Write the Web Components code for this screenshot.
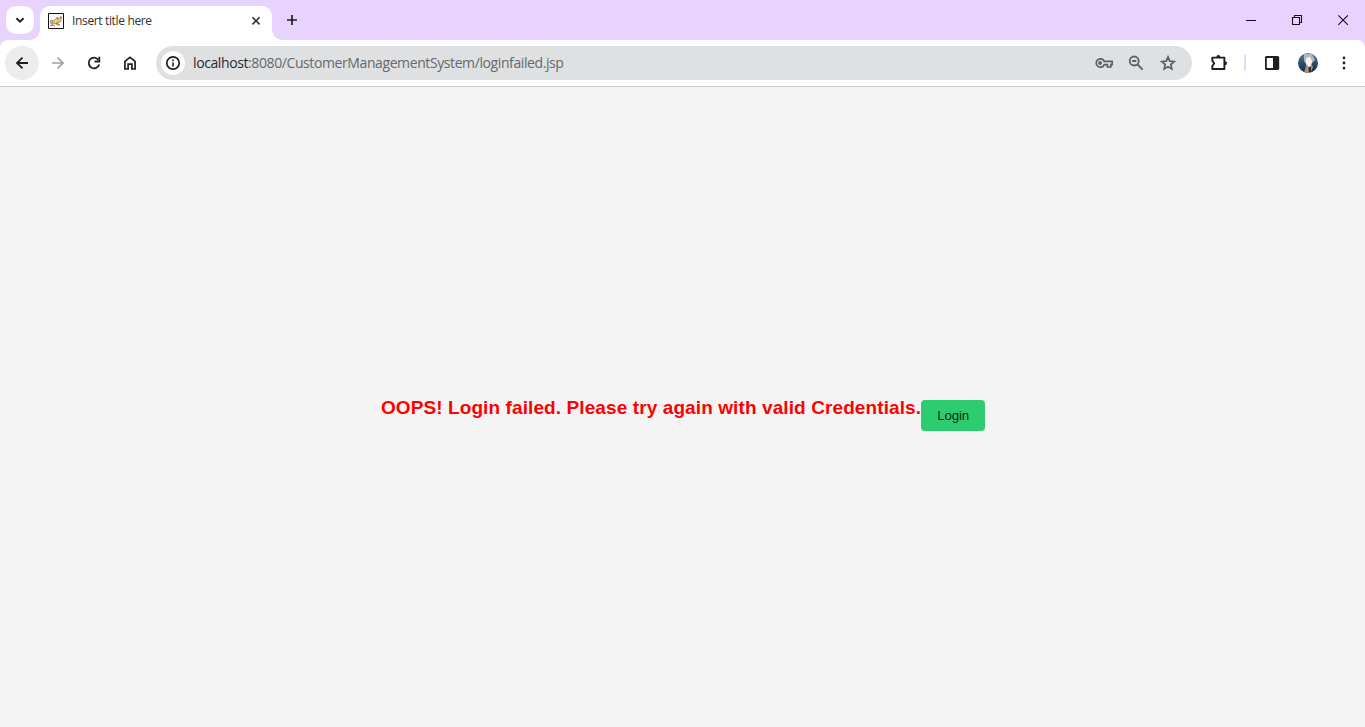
<!DOCTYPE html>
<html lang="en">
<head>
<meta charset="utf-8">
<title>Insert title here</title>
<style>
html,body{margin:0;height:100%;overflow:hidden}
body{font-family:"Open Sans","Noto Sans",sans-serif;background:#f4f4f4}
</style>
</head>
<body>
<browser-window>
  <tab-strip slot="tabs"><browser-tab>Insert title here</browser-tab></tab-strip>
  <tool-bar slot="toolbar"><address-bar><span slot="host">localhost</span><span slot="path">:8080/CustomerManagementSystem/loginfailed.jsp</span></address-bar></tool-bar>
  <login-failed><span>OOPS! Login failed. Please try again with valid Credentials.</span><login-button slot="action">Login</login-button></login-failed>
</browser-window>
<script>
const define = (name, html) => customElements.define(name, class extends HTMLElement {
  constructor() {
    super();
    const t = document.createElement('template');
    t.innerHTML = html;
    this.attachShadow({mode: 'open'}).append(t.content.cloneNode(true));
  }
});

const icons = {
  chevron: [16, '<path d="M4.4 6.2 8 9.7l3.600-3.500" stroke-width="1.9"/>'],
  close: [16, '<path d="m4.400 4.200 7.200 7.200m0-7.200-7.200 7.200" stroke-width="1.6"/>'],
  plus: [16, '<path d="M8 3v10M3 8h10" stroke-width="1.7"/>'],
  min: [16, '<path d="M3 8.500h10" stroke-width="1"/>'],
  restore: [16, '<path d="M3.500 5.500h7v7h-7zM5.500 5.500v-2h7v7h-2" stroke-width="1.1"/>'],
  x: [16, '<path d="m3.300 3.300 9.600 9.600m0-9.600-9.600 9.600" stroke-width="1.1"/>'],
  back: [16, '<path d="M14 8H3m5.500-5.300L3 8l5.500 5.300" stroke-width="1.8"/>'],
  forward: [16, '<path d="M2 8h11M7.500 2.700 13 8l-5.500 5.300" stroke-width="1.7"/>'],
  reload: [16, '<path d="M12.300 4.700A5.350 5.350 0 1 0 13.200 9.500" stroke-width="1.8"/><path d="M13.300 1.800v4.700H8.600" stroke-width="1.800"/>'],
  home: [16, '<path d="M2.900 14V6.300L8 2.400l5.100 3.900V14H9.900V9.200H6.100V14z" stroke-width="1.7"/>'],
  info: [16, '<circle cx="8" cy="8" r="6.200" stroke-width="1.700"/><path d="M8 7.400v4M8 4.600v1.600" stroke-width="1.600"/>'],
  key: [20, '<path d="M10.300 8.400A4.200 4.200 0 1 0 10.300 11.600H13.400V14H16.800V11.600H18.200V8.400z" stroke-width="1.700"/><circle cx="6.100" cy="10" r="1.900" fill="currentColor" stroke="none"/>'],
  zoom: [20, '<circle cx="8.200" cy="8" r="4.500" stroke-width="1.800"/><path d="m11.500 11.500 5.200 5.200M6.100 8h4.200" stroke-width="1.800"/>'],
  star: [20, '<path d="m10 3.900 1.750 4.250 4.450.4-3.400 3 1 4.500-3.800-2.400-3.800 2.400 1-4.500-3.400-3 4.450-.4z" stroke-width="1.700"/>'],
  puzzle: [20, '<path d="M3.300 4.600H15.400V16H3.300V13L5.200 10.400 3.300 7.700z" stroke-width="1.900" stroke-linejoin="round"/><path d="M7.400 4.100a2 2 0 0 1 4 0zM16 8.200a2 2 0 0 1 0 4z" fill="currentColor" stroke="none"/>'],
  panel: [20, '<rect x="3.900" y="4" width="12.400" height="12" rx=".6" stroke-width="1.800"/><path d="M11 4h5v12h-5z" fill="currentColor" stroke="none"/>'],
  dots: [20, '<g fill="currentColor" stroke="none"><circle cx="10" cy="4.900" r="1.400"/><circle cx="10" cy="10" r="1.400"/><circle cx="10" cy="15.100" r="1.400"/></g>']
};
customElements.define('ui-icon', class extends HTMLElement {
  constructor() { super(); this.attachShadow({mode: 'open'}); }
  connectedCallback() {
    const [s, d] = icons[this.getAttribute('name')];
    this.shadowRoot.innerHTML = `<style>:host{display:block;flex:none;width:${s}px;height:${s}px}svg{display:block}</style><svg width="${s}" height="${s}" viewBox="0 0 ${s} ${s}" fill="none" stroke="currentColor">${d}</svg>`;
  }
});

define('browser-window', `<style>
:host{display:flex;flex-direction:column;height:100vh;background:#e8d3fe}
</style><slot name="tabs"></slot><slot name="toolbar"></slot><slot></slot>`);

define('tab-strip', `<style>
:host{display:flex;height:40px;flex:none;background:#e8d3fe;color:#1f1f1f}
.search{width:28px;height:28px;border-radius:10px;background:#fff;display:grid;place-items:center;margin:6px 6px 0}
.new{margin:12px 0 0 12px}
.controls{display:flex;margin:0 -1px 0 auto;color:#160d20}
.controls div{width:46px;display:grid;justify-items:center;padding-top:12px}
</style>
<div class="search"><ui-icon name="chevron"></ui-icon></div>
<slot></slot>
<ui-icon class="new" name="plus"></ui-icon>
<div class="controls"><div><ui-icon name="min"></ui-icon></div><div><ui-icon name="restore"></ui-icon></div><div><ui-icon name="x"></ui-icon></div></div>`);

define('browser-tab', `<style>
:host{display:flex;align-items:center;position:relative;box-sizing:border-box;width:232px;height:34px;margin-top:6px;padding:0 8px 5px;border-radius:10px 10px 0 0;background:#fff;font-size:12px;color:#303030}
:host::before,:host::after{content:"";position:absolute;bottom:0;width:10px;height:10px}
:host::before{right:100%;background:radial-gradient(circle at 0 0,transparent 9.500px,#fff 10px)}
:host::after{left:100%;background:radial-gradient(circle at 100% 0,transparent 9.500px,#fff 10px)}
.fav{display:block;margin-right:8px;flex:none}
.label{white-space:nowrap;letter-spacing:-.35px;line-height:18px}
ui-icon{margin-left:auto}
</style>
<svg class="fav" width="16" height="16" viewBox="0 0 16 16"><path fill="#fff" stroke="#111" d="M.5.500h15v15H.5z"/><path fill="#c8a468" d="m7 6 2-2 1.500 1L13 3l1 1-1 5-2 1-1 1 2 1-2 1-3-2-3 1-2-1 2-3z"/><path fill="#ead08f" d="m6 8 3-2 1 3-3 1zM10.500 6l2-1-.5 3-2 0z"/><path fill="none" stroke="#706048" stroke-width=".7" d="m8 10 4 2M12.800 3.500v2M9 4l.8 2"/><path fill="none" stroke="#77787a" stroke-width=".9" d="m4 10-2-1 1-2 2 .5M2 13l3-1 2 1"/></svg>
<span class="label"><slot></slot></span><ui-icon name="close"></ui-icon>`);

define('tool-bar', `<style>
:host{display:flex;align-items:center;box-sizing:border-box;height:47px;flex:none;background:#fff;border-bottom:1px solid #cbcbcc;border-radius:8px 8px 0 0;padding:0 11px 0 5px;color:#1f1f1f}
.b{width:34px;height:34px;margin-right:2px;display:grid;place-items:center;border-radius:50%}
.on{background:#ececee}.off{color:#a0a0a0}
slot{display:block;flex:1;margin-left:7px}
.ext{margin-left:17px}
.sep{width:2px;height:16px;background:#e5d8f8;margin:0 16px 0 15px}
.avatar{margin:0 16px;display:block}
</style>
<div class="b on"><ui-icon name="back"></ui-icon></div><div class="b off"><ui-icon name="forward"></ui-icon></div><div class="b"><ui-icon name="reload"></ui-icon></div><div class="b"><ui-icon name="home"></ui-icon></div>
<slot></slot>
<ui-icon class="ext" name="puzzle"></ui-icon><div class="sep"></div><ui-icon name="panel"></ui-icon>
<svg class="avatar" width="20" height="20" viewBox="0 0 20 20"><defs><clipPath id="c"><circle cx="10" cy="10" r="10"/></clipPath><linearGradient id="g" x2="0" y2="1"><stop stop-color="#6b7787"/><stop offset=".45" stop-color="#2e5479"/><stop offset="1" stop-color="#14253c"/></linearGradient><filter id="f"><feGaussianBlur stdDeviation=".65"/></filter></defs><g clip-path="url(#c)"><path fill="url(#g)" d="M0 0h20v20H0z"/><g filter="url(#f)"><path fill="#aeb8c3" d="M6 1h8l3 6-4 4H8L6 8z"/><path fill="#fff3e8" d="m8 5 4-1 2 4-1 5-4 2-1-5z"/><path fill="#bd8b70" d="m8 13 2-1 1 8H6zM13 11l2 3-2 5z"/></g></g></svg>
<ui-icon name="dots"></ui-icon>`);

define('address-bar', `<style>
:host{display:flex;align-items:center;box-sizing:border-box;height:34px;border-radius:17px;background:#dfe0e2;padding:0 14px 0 5px;font-size:14px;color:#66686b}
.info{width:24px;height:24px;border-radius:50%;background:#fff;color:#1f1f1f;display:grid;place-items:center;margin-right:8px}
.url{flex:1;white-space:nowrap;letter-spacing:-.4px;line-height:20px}
.host{color:#292a2d}
.actions{display:flex;gap:12px;color:#5e6063}
</style>
<div class="info"><ui-icon name="info"></ui-icon></div><div class="url"><span class="host"><slot name="host"></slot></span><slot name="path"></slot></div>
<div class="actions"><ui-icon name="key"></ui-icon><ui-icon name="zoom"></ui-icon><ui-icon name="star"></ui-icon></div>`);

define('login-failed', `<style>
:host{display:flex;flex:1;justify-content:center;align-items:center;background:#f4f4f4;font-family:"Liberation Sans",Arial,sans-serif}
.row{display:flex;align-items:flex-start;height:21px;padding-left:1px}
h3{margin:0;font-size:19px;line-height:21px;letter-spacing:.1px;color:#f00;white-space:nowrap}
.action{margin-top:3px}
</style><div class="row"><h3><slot></slot></h3><div class="action"><slot name="action"></slot></div></div>`);

define('login-button', `<style>
:host{display:block}
button{display:block;width:64px;height:31px;padding:0;border:0;border-radius:4px;background:#2ecc71;color:#0b2915;font:13.333px "Liberation Sans",Arial,sans-serif;letter-spacing:-.2px}
</style><button type="button"><slot></slot></button>`);
</script>
</body>
</html>
